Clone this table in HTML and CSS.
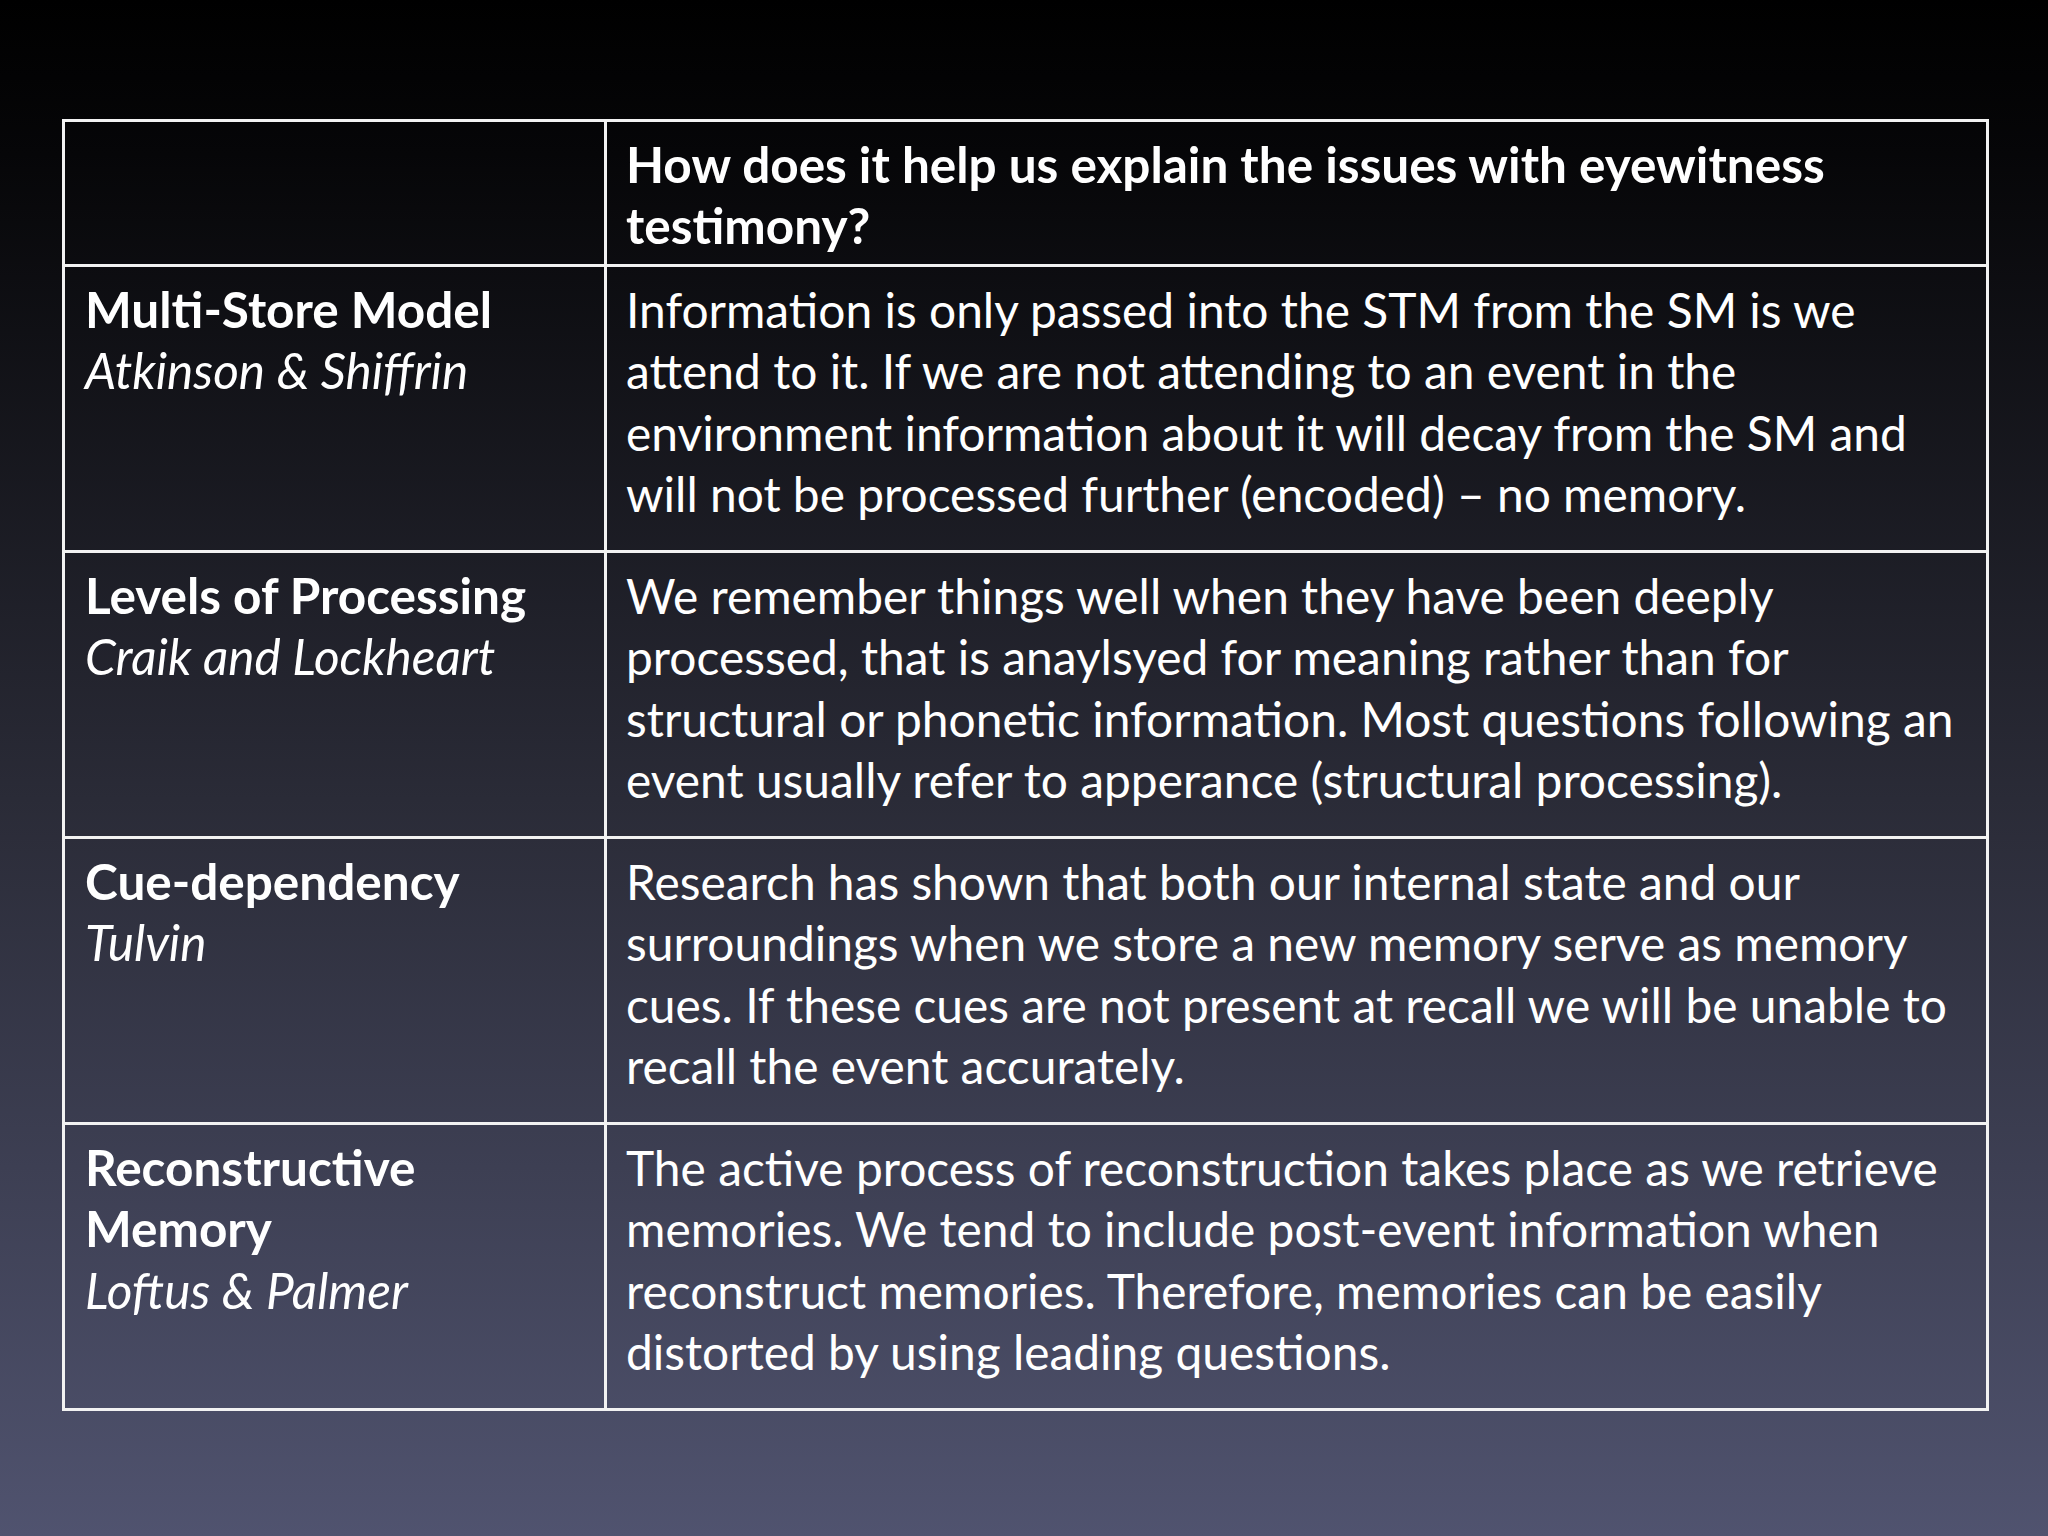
FILE: index.html
```html
<!DOCTYPE html>
<html lang="en">
<head>
<meta charset="utf-8">
<title>Memory models and eyewitness testimony</title>
<link rel="stylesheet" href="styles.css">
</head>
<body>
<main class="slide">
  <table class="grid">
    <tr class="head">
      <td class="name"></td>
      <td class="desc bold">How does it help us explain the issues with eyewitness<br>testimony?</td>
    </tr>
    <tr class="row">
      <td class="name"><span class="bold">Multi-Store Model</span><br><span class="ital">Atkinson &amp; Shiffrin</span></td>
      <td class="desc">Information is only passed into the STM from the SM is we<br>attend to it. If we are not attending to an event in the<br>environment information about it will decay from the SM and<br>will not be processed further (encoded) – no memory.</td>
    </tr>
    <tr class="row">
      <td class="name"><span class="bold">Levels of Processing</span><br><span class="ital">Craik and Lockheart</span></td>
      <td class="desc">We remember things well when they have been deeply<br>processed, that is anaylsyed for meaning rather than for<br>structural or phonetic information. Most questions following an<br>event usually refer to apperance (structural processing).</td>
    </tr>
    <tr class="row">
      <td class="name"><span class="bold">Cue-dependency</span><br><span class="ital">Tulvin</span></td>
      <td class="desc">Research has shown that both our internal state and our<br>surroundings when we store a new memory serve as memory<br>cues. If these cues are not present at recall we will be unable to<br>recall the event accurately.</td>
    </tr>
    <tr class="row">
      <td class="name"><span class="bold">Reconstructive<br>Memory</span><br><span class="ital">Loftus &amp; Palmer</span></td>
      <td class="desc">The active process of reconstruction takes place as we retrieve<br>memories. We tend to include post-event information when<br>reconstruct memories. Therefore, memories can be easily<br>distorted by using leading questions.</td>
    </tr>
  </table>
</main>
</body>
</html>
```

FILE: styles.css
```css
html, body {
  margin: 0;
  padding: 0;
}
body {
  width: 2048px;
  height: 1536px;
  overflow: hidden;
  background: linear-gradient(to bottom, #000000 0%, #060608 10%, #2a2b37 52%, #50536f 100%);
  font-family: Lato, "Open Sans", sans-serif;
  color: #ffffff;
}
.slide {
  padding: 119px 0 0 62px;
}
.grid {
  border-collapse: collapse;
  width: 1927px;
  table-layout: fixed;
}
.grid td {
  border: 3px solid #f2f2f2;
  vertical-align: top;
  padding: 12px 16px 2px 20px;
  font-size: 47.9px;
  line-height: 61.4px;
  white-space: nowrap;
}
.grid td.name {
  width: 503px;
}
.grid td.desc {
  padding-left: 19px;
}
.grid td.bold,
.bold,
.ital {
  font-size: 49.5px;
}
.head td {
  height: 128px;
}
.row td {
  height: 269px;
}
.bold {
  font-weight: 700;
}
.ital {
  font-style: italic;
}
```
